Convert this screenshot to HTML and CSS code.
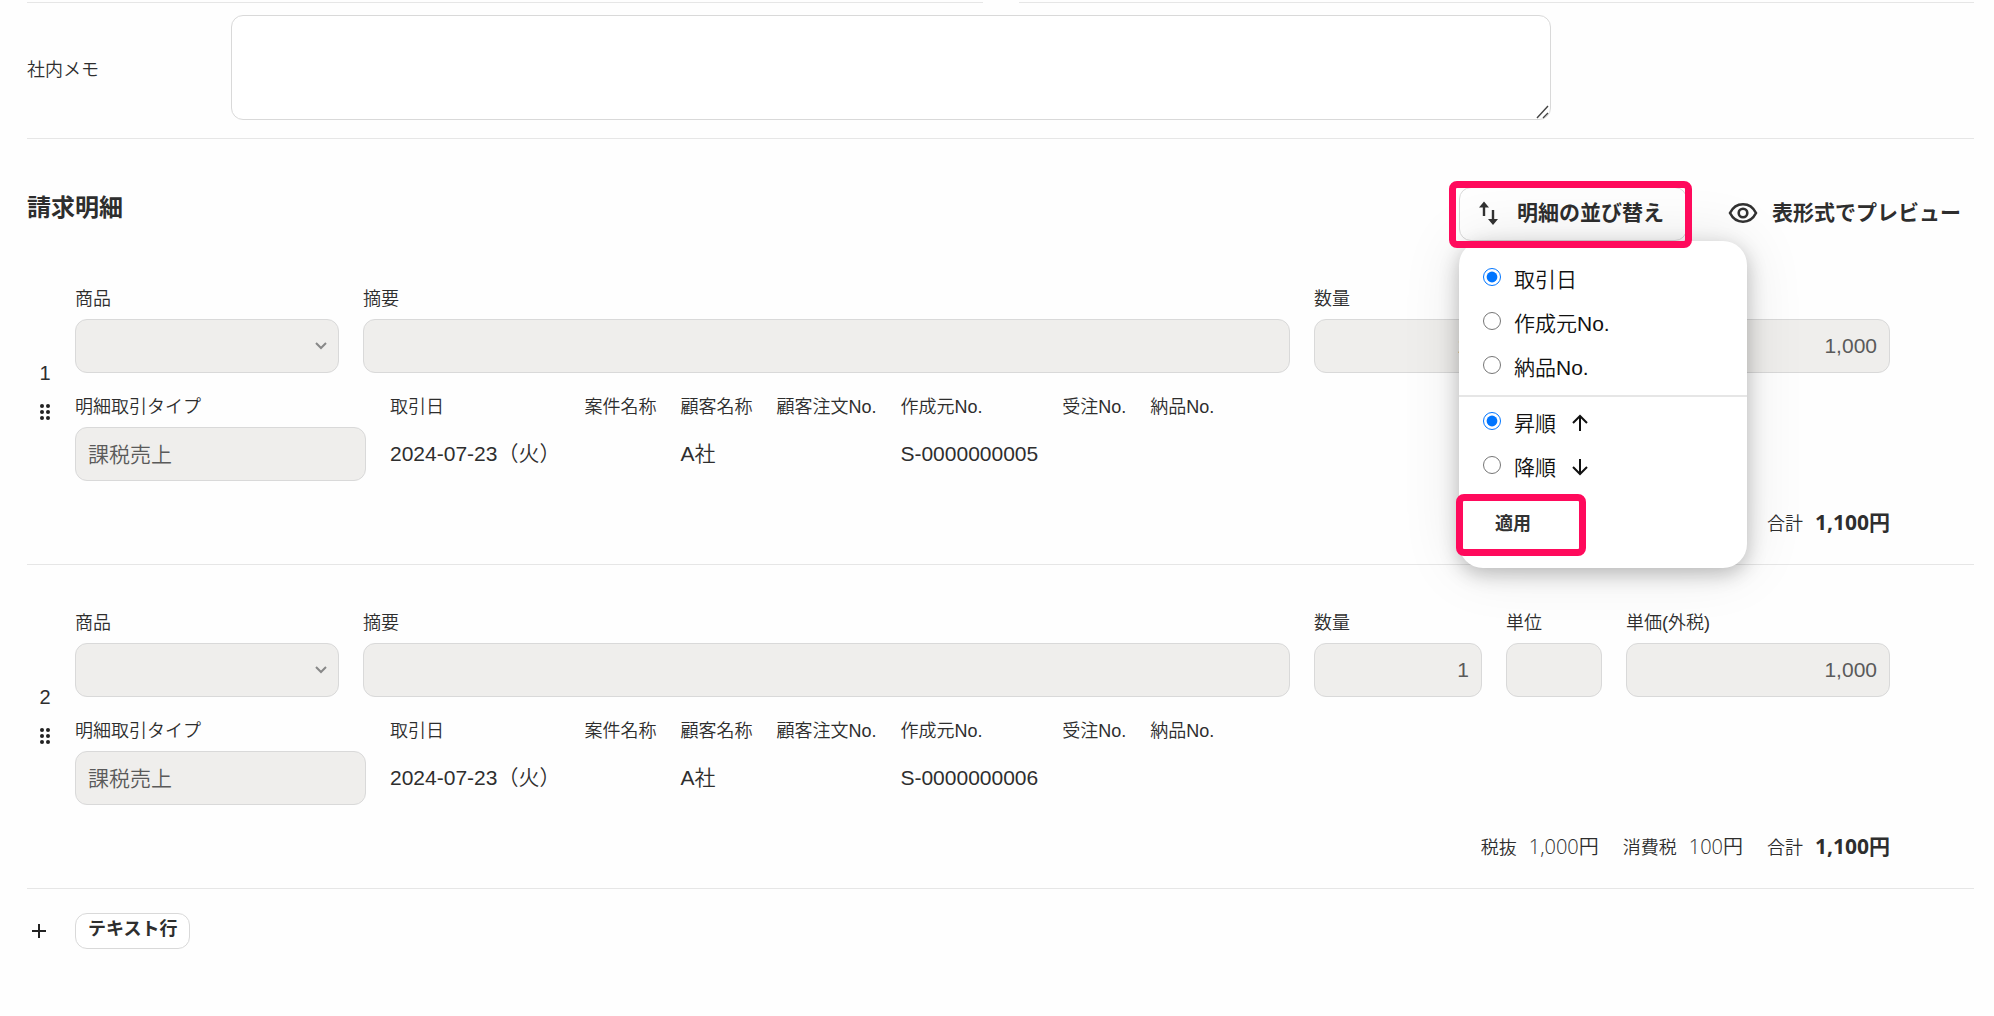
FILE: index.html
```html
<!DOCTYPE html>
<html lang="ja">
<head>
	<meta charset="utf-8">
	<title>請求明細</title>
	<link rel="stylesheet" href="styles.css">
</head>
<body>
	<form class="container">
		<div class="lines"><span></span><span></span></div>
		<div class="memo">
			<label for="memo">社内メモ</label>
			<textarea id="memo" name="memo"></textarea>
		</div>

		<div class="head">
			<h2>請求明細</h2>
			<div class="tools">
				<div class="sort">
					<button type="button" class="tool tool-open">
						<svg width="24" height="28" viewBox="0 0 24 28" fill="none" stroke="#323232" stroke-width="2.4">
							<path d="M7 17V5M16 11v12"/>
							<path d="M2 8.500L7 2.500l5 6zM11 20L16 26l5-6z" fill="#323232" stroke="none"/>
						</svg>
						<span>明細の並び替え</span>
					</button>
					<div class="mark mark-sort"></div>
					<div class="menu">
						<div class="menu-group">
							<label><input type="radio" name="key" checked>取引日</label>
							<label><input type="radio" name="key">作成元No.</label>
							<label><input type="radio" name="key">納品No.</label>
						</div>
						<div class="menu-group">
							<label><input type="radio" name="order" checked>昇順
								<svg width="18" height="18" viewBox="0 0 18 18" fill="none" stroke="#111" stroke-width="2"><path d="M9 17V2M2 9l7-7 7 7"/></svg>
							</label>
							<label><input type="radio" name="order">降順
								<svg width="18" height="18" viewBox="0 0 18 18" fill="none" stroke="#111" stroke-width="2"><path d="M9 1v15M2 9l7 7 7-7"/></svg>
							</label>
						</div>
						<button type="button" class="apply">適用</button>
						<div class="mark mark-apply"></div>
					</div>
				</div>
				<button type="button" class="tool tool-preview">
					<svg width="30" height="24" viewBox="0 0 30 24" fill="none" stroke="#323232" stroke-width="2.6">
						<path d="M2 12C5 6 9.500 3.300 15 3.300S25 6 28 12C25 18 20.500 20.700 15 20.700S5 18 2 12z"/>
						<circle cx="15" cy="12" r="4.300"/>
					</svg>
					<span>表形式でプレビュー</span>
				</button>
			</div>
		</div>

		<div class="item">
			<div class="grip">
				<span>1</span>
				<svg width="12" height="18" viewBox="0 0 12 18" fill="#222"><circle cx="3" cy="3" r="2"/><circle cx="9" cy="3" r="2"/><circle cx="3" cy="9" r="2"/><circle cx="9" cy="9" r="2"/><circle cx="3" cy="15" r="2"/><circle cx="9" cy="15" r="2"/></svg>
			</div>
			<div class="item-body">
				<div class="row">
					<div class="field w-goods"><label for="goods1">商品</label><select id="goods1" class="box" disabled></select></div>
					<div class="field w-note"><label for="note1">摘要</label><input id="note1" class="box" type="text" disabled></div>
					<div class="field w-qty"><label for="qty1">数量</label><input id="qty1" class="box num" type="text" value="1" disabled></div>
					<div class="field w-unit"><label for="unit1">単位</label><input id="unit1" class="box" type="text" disabled></div>
					<div class="field w-price"><label for="price1">単価(外税)</label><input id="price1" class="box num" type="text" value="1,000" disabled></div>
				</div>
				<div class="row">
					<div class="field w-type"><label for="type1">明細取引タイプ</label><input id="type1" class="box" type="text" value="課税売上" disabled></div>
					<dl><dt>取引日</dt><dd>2024-07-23（火）</dd></dl>
					<dl><dt>案件名称</dt><dd></dd></dl>
					<dl><dt>顧客名称</dt><dd>A社</dd></dl>
					<dl><dt>顧客注文No.</dt><dd></dd></dl>
					<dl><dt>作成元No.</dt><dd>S-0000000005</dd></dl>
					<dl><dt>受注No.</dt><dd></dd></dl>
					<dl><dt>納品No.</dt><dd></dd></dl>
				</div>
				<div class="total">
					<p>税抜<span>1,000円</span></p>
					<p>消費税<span>100円</span></p>
					<p>合計<b>1,100円</b></p>
				</div>
			</div>
		</div>

		<div class="item">
			<div class="grip">
				<span>2</span>
				<svg width="12" height="18" viewBox="0 0 12 18" fill="#222"><circle cx="3" cy="3" r="2"/><circle cx="9" cy="3" r="2"/><circle cx="3" cy="9" r="2"/><circle cx="9" cy="9" r="2"/><circle cx="3" cy="15" r="2"/><circle cx="9" cy="15" r="2"/></svg>
			</div>
			<div class="item-body">
				<div class="row">
					<div class="field w-goods"><label for="goods2">商品</label><select id="goods2" class="box" disabled></select></div>
					<div class="field w-note"><label for="note2">摘要</label><input id="note2" class="box" type="text" disabled></div>
					<div class="field w-qty"><label for="qty2">数量</label><input id="qty2" class="box num" type="text" value="1" disabled></div>
					<div class="field w-unit"><label for="unit2">単位</label><input id="unit2" class="box" type="text" disabled></div>
					<div class="field w-price"><label for="price2">単価(外税)</label><input id="price2" class="box num" type="text" value="1,000" disabled></div>
				</div>
				<div class="row">
					<div class="field w-type"><label for="type2">明細取引タイプ</label><input id="type2" class="box" type="text" value="課税売上" disabled></div>
					<dl><dt>取引日</dt><dd>2024-07-23（火）</dd></dl>
					<dl><dt>案件名称</dt><dd></dd></dl>
					<dl><dt>顧客名称</dt><dd>A社</dd></dl>
					<dl><dt>顧客注文No.</dt><dd></dd></dl>
					<dl><dt>作成元No.</dt><dd>S-0000000006</dd></dl>
					<dl><dt>受注No.</dt><dd></dd></dl>
					<dl><dt>納品No.</dt><dd></dd></dl>
				</div>
				<div class="total">
					<p>税抜<span>1,000円</span></p>
					<p>消費税<span>100円</span></p>
					<p>合計<b>1,100円</b></p>
				</div>
			</div>
		</div>

		<div class="add">
			<svg width="14" height="14" viewBox="0 0 14 14" fill="none" stroke="#222" stroke-width="2"><path d="M7 0v14M0 7h14"/></svg>
			<button type="button" class="add-text">テキスト行</button>
		</div>
	</form>
</body>
</html>
```

FILE: styles.css
```css
*{margin: 0; padding: 0; box-sizing: border-box;}
body{
	background: #fefefe;
	color: #2e2e2e;
	font-family: "Liberation Sans", "Noto Sans CJK JP", sans-serif;
	font-size: 18px;
	font-weight: 350;
	line-height: 27px;
}
button, input, select, textarea{
	font: inherit;
	color: inherit;
}
.container{
	padding: 2px 20px 0 27px;
}
.lines{
	display: flex;
	gap: 36px;
}
.lines span{
	flex: 1;
	height: 1px;
	background: #e6e6e6;
}
.memo{
	display: flex;
	align-items: center;
	padding: 12px 0 18px;
	border-bottom: 1px solid #e6e6e6;
}
.memo label{
	width: 204px;
	padding-top: 6px;
}
.memo textarea{
	display: block;
	flex: 1;
	max-width: 1320px;
	height: 105px;
	padding: 12px;
	border: 1px solid #d9d9d9;
	border-radius: 12px;
	background: #fff;
}
.memo textarea::-webkit-resizer{
	background: url("data:image/svg+xml,%3Csvg xmlns='http://www.w3.org/2000/svg' width='15' height='15' fill='none' stroke='%23444' stroke-width='1.4'%3E%3Cpath d='M2 14L13 2M8 14l5-5'/%3E%3C/svg%3E") no-repeat;
}
.head{
	display: flex;
	justify-content: space-between;
	padding-top: 48px;
}
.head h2{
	padding-top: 3px;
	font-size: 24px;
	line-height: 36px;
}
.tools{
	display: flex;
	gap: 24px;
}
.sort{
	position: relative;
}
.tool{
	display: flex;
	align-items: center;
	height: 54px;
	border: 1px solid transparent;
	border-radius: 12px;
	background: none;
	font-size: 21px;
	font-weight: bold;
}
.tool-open{
	gap: 16px;
	padding: 0 22px 3px 17px;
	border-color: #d9d9d9;
}
.tool-preview{
	gap: 14px;
	padding: 0 12px 3px 16px;
}
.menu{
	position: absolute;
	z-index: 1;
	top: 54px;
	left: 0;
	width: 288px;
	padding-bottom: 20px;
	border-radius: 24px;
	background: #fff;
	box-shadow: 0 6px 20px rgba(0,0,0,.24), 0 0 60px rgba(0,0,0,.1);
	color: #111;
	font-size: 21px;
}
.menu-group{
	padding: 16px 24px 6px;
}
.menu-group + .menu-group{
	border-top: 2px solid #e6e6e6;
	padding: 4px 24px 11px;
}
.menu-group label{
	display: flex;
	align-items: center;
	height: 44px;
}
.menu-group input{
	width: 18px;
	height: 18px;
	margin: 0 13px 4px 0;
}
.menu-group svg{
	margin-left: 15px;
}
.apply{
	display: block;
	height: 48px;
	margin-left: 24px;
	padding: 0 12px;
	border: 0;
	background: none;
	color: #323232;
	font-size: 18px;
	font-weight: bold;
}
/* 操作箇所の強調枠 */
.mark{
	position: absolute;
	z-index: 2;
	border: 7px solid #ff0a5c;
	border-radius: 8px;
	pointer-events: none;
}
.mark-sort{
	top: -6px;
	left: -10px;
	right: -5px;
	height: 67px;
}
.mark-apply{
	left: -3px;
	bottom: 12px;
	width: 130px;
	height: 62px;
}
.item{
	display: flex;
	padding: 45px 84px 26px 0;
	border-bottom: 1px solid #e6e6e6;
}
.grip{
	display: flex;
	flex-direction: column;
	align-items: center;
	width: 36px;
	margin-right: 12px;
	padding-top: 74px;
	gap: 16px;
	font-size: 20px;
}
.item-body{
	flex: 1;
}
.row{
	display: flex;
	gap: 24px;
	margin-bottom: 21px;
}
.field label, .row dt{
	display: block;
	margin-bottom: 6px;
}
.box{
	display: block;
	width: 100%;
	height: 54px;
	padding: 0 12px;
	border: 1px solid #d9d9d9;
	border-radius: 12px;
	background: #efeeec;
	color: #5a5a5a;
	font-size: 21px;
	opacity: 1;
}
.w-type .box{
	padding-bottom: 3px;
}
select.box{
	appearance: none;
	background: #efeeec url("data:image/svg+xml,%3Csvg xmlns='http://www.w3.org/2000/svg' width='12' height='8' fill='none' stroke='%23888' stroke-width='2'%3E%3Cpath d='M1 1l5 5 5-5'/%3E%3C/svg%3E") no-repeat right 11px center;
}
.num{
	text-align: right;
}
.w-goods, .w-price{width: 264px;}
.w-note{flex: 1;}
.w-qty{width: 168px;}
.w-unit{width: 96px;}
.w-type{width: 291px;}
.row dd{
	font-size: 21px;
	line-height: 54px;
}
.total{
	display: flex;
	justify-content: flex-end;
	gap: 24px;
	padding-top: 7px;
}
.total p{
	display: flex;
	align-items: baseline;
	gap: 12px;
}
.total span, .total b{
	font-family: "Open Sans", "Noto Sans CJK JP", sans-serif;
	font-size: 20px;
}
.total b{
	font-size: 21px;
	font-weight: bold;
}
.add{
	display: flex;
	align-items: center;
	gap: 29px;
	padding: 24px 5px;
}
.add-text{
	height: 36px;
	padding: 0 12px 3px;
	border: 1px solid #d9d9d9;
	border-radius: 12px;
	background: #fff;
	font-weight: bold;
}
```
